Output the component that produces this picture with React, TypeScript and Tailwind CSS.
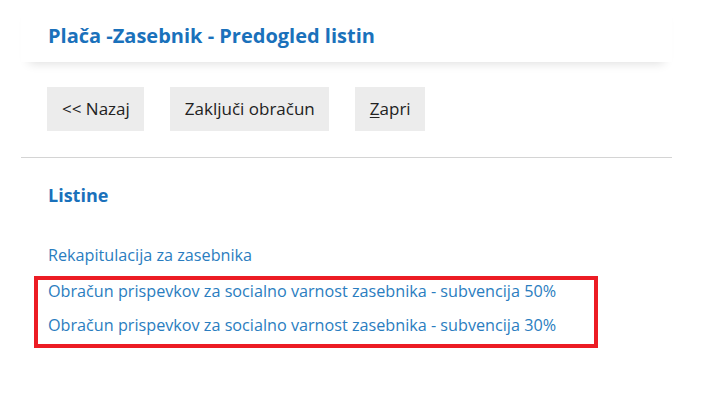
export default function App() {
  const links = [
    "Obračun prispevkov za socialno varnost zasebnika - subvencija 50%",
    "Obračun prispevkov za socialno varnost zasebnika - subvencija 30%",
  ];
  return (
    <div className="min-h-[402px] w-[701px] bg-white font-['Open_Sans',sans-serif]">
      <div className="mx-[21px] w-[651px]">
        {/* header */}
        <div className="bg-white pl-[27px] pt-[23px] h-[62px] shadow-[0_9px_10px_-8px_rgba(0,0,0,0.14)]">
          <h1 className="text-[20px] font-bold leading-[26px] text-[#1a71bb]">
            Plača -Zasebnik - Predogled listin
          </h1>
        </div>

        {/* toolbar */}
        <div className="flex gap-[26px] pl-[26px] pt-[25px] pb-[26px] border-b border-[#d4d4d4]">
          <button className="h-[44px] pl-[15px] pr-[14px] bg-[#ececec] text-[17px] text-[#222]">
            &lt;&lt; Nazaj
          </button>
          <button className="h-[44px] pl-[15px] pr-[14px] bg-[#ececec] text-[17px] text-[#222]">
            Zaključi obračun
          </button>
          <button className="h-[44px] pl-[15px] pr-[14px] bg-[#ececec] text-[17px] text-[#222]">
            <span className="underline underline-offset-2">Z</span>apri
          </button>
        </div>

        {/* documents */}
        <div className="pl-[27px] pt-[25px]">
          <h2 className="text-[18px] font-bold leading-[24px] text-[#1a71bb]">Listine</h2>
          <div className="mt-[37px] text-[16.2px] leading-[22px] text-[#2a7dc0]">
            <a className="block">Rekapitulacija za zasebnika</a>
          </div>
          <div className="-ml-[14px] mt-[10px] w-[564px] border-4 border-[#ec1c24] pl-[10px] pb-[8px] text-[16.2px] leading-[22px] text-[#2a7dc0]">
            {links.map((l, i) => (
              <a key={l} className={`block ${i ? "mt-[12px]" : ""}`}>
                {l}
              </a>
            ))}
          </div>
        </div>
      </div>
    </div>
  );
}
